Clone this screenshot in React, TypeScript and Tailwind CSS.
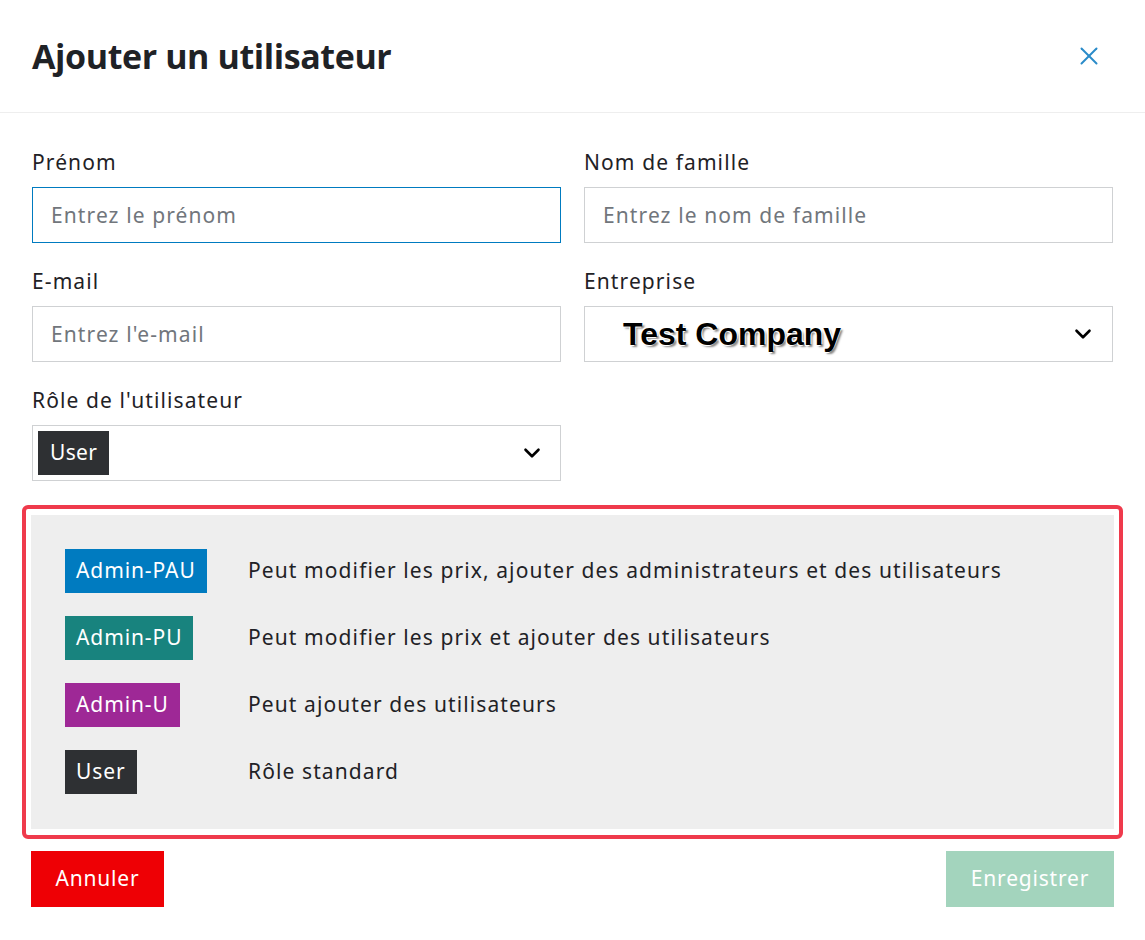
import { ChevronDown, X } from 'lucide-react';

const roles = [
  { name: 'Admin-PAU', color: 'bg-[#007bc0]', text: 'Peut modifier les prix, ajouter des administrateurs et des utilisateurs' },
  { name: 'Admin-PU', color: 'bg-[#18837e]', text: 'Peut modifier les prix et ajouter des utilisateurs' },
  { name: 'Admin-U', color: 'bg-[#9e2896]', text: 'Peut ajouter des utilisateurs' },
  { name: 'User', color: 'bg-[#2e3033]', text: 'Rôle standard' },
];

const Field = ({ label, placeholder, focused }: { label: string; placeholder: string; focused?: boolean }) => (
  <div className="flex flex-col">
    <label className="h-[26px] mb-[12px] leading-[26px]">{label}</label>
    <input
      placeholder={placeholder}
      className={`h-[56px] px-[18px] tracking-[1.1px] outline-none placeholder:text-[#71767c] ${
        focused ? 'border border-[#007bc0]' : 'border border-[#cfd1d3]'
      }`}
    />
  </div>
);

export default function App() {
  return (
    <div className="w-[1145px] h-[940px] bg-white font-['Noto_Sans',sans-serif] text-[21px] tracking-[1.1px] text-[#1f2226]">
      <div className="flex items-center justify-between h-[113px] pl-[32px] pr-[41px] border-b border-[#eeeeee]">
        <h1 className="text-[34px] font-bold tracking-[-0.4px] font-['Open_Sans',sans-serif]">Ajouter un utilisateur</h1>
        <X className="w-[30px] h-[30px] text-[#2a8bc9]" strokeWidth={1.6} />
      </div>

      <div className="px-[32px] pt-[36px]">
        <div className="grid grid-cols-2 gap-x-[23px] gap-y-[25px]">
          <Field label="Prénom" placeholder="Entrez le prénom" focused />
          <Field label="Nom de famille" placeholder="Entrez le nom de famille" />
          <Field label="E-mail" placeholder="Entrez l'e-mail" />
          <div className="flex flex-col">
            <label className="h-[26px] mb-[12px] leading-[26px]">Entreprise</label>
            <div className="flex items-center justify-between h-[56px] pl-[38px] pr-[16px] border border-[#cfd1d3]">
              <span className="font-['Liberation_Sans',sans-serif] font-bold text-[32px] tracking-normal text-black [text-shadow:_-1px_-1px_0_#fff,1px_-1px_0_#fff,-1px_1px_0_#fff,2px_2px_2px_#888]">
                Test Company
              </span>
              <ChevronDown className="w-[26px] h-[26px] text-black" strokeWidth={2.4} />
            </div>
          </div>
          <div className="flex flex-col">
            <label className="h-[26px] mb-[12px] leading-[26px]">Rôle de l'utilisateur</label>
            <div className="flex items-center justify-between h-[56px] pl-[5px] pr-[15px] border border-[#cfd1d3]">
              <span className="flex items-center h-[44px] px-[12px] bg-[#2e3033] text-white tracking-[0.3px]">User</span>
              <ChevronDown className="w-[26px] h-[26px] text-black" strokeWidth={2.4} />
            </div>
          </div>
        </div>
      </div>

      <div className="mx-[22px] mt-[24px] px-[5px] py-[6px] border-[4px] border-[#ef3a4c] rounded-[6px]">
        <div className="flex flex-col gap-[23px] bg-[#eeeeee] pl-[34px] pt-[34px] pb-[35px]">
          {roles.map((r) => (
            <div key={r.name} className="flex items-center">
              <div className="w-[183px]">
                <span className={`inline-flex items-center h-[44px] px-[11px] text-white tracking-[0.9px] ${r.color}`}>{r.name}</span>
              </div>
              <span>{r.text}</span>
            </div>
          ))}
        </div>
      </div>

      <div className="flex justify-between px-[31px] mt-[12px]">
        <button className="h-[56px] w-[133px] bg-[#ee0005] text-white tracking-[0.8px]">Annuler</button>
        <button className="h-[56px] w-[168px] bg-[#a3d4bd] text-white tracking-[0.8px]">Enregistrer</button>
      </div>
    </div>
  );
}
